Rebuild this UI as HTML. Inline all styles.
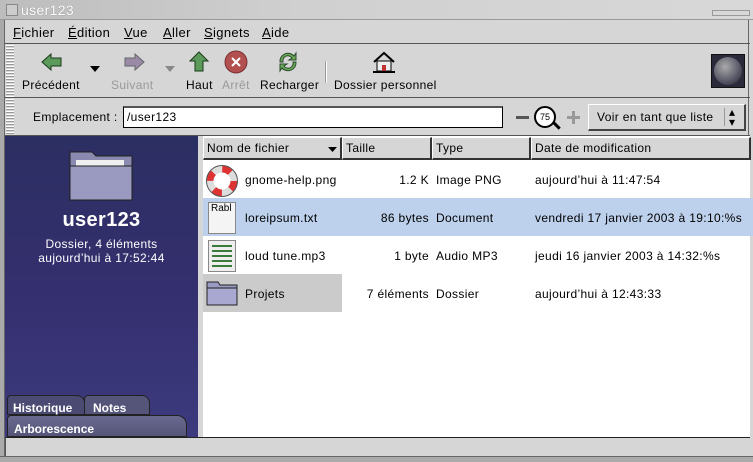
<!DOCTYPE html>
<html><head><meta charset="utf-8"><style>
*{margin:0;padding:0;box-sizing:border-box}
body{width:753px;height:462px;overflow:hidden;background:#d6d6d6;font-family:"Liberation Sans","DejaVu Sans",sans-serif;font-size:12px;color:#000;position:relative;letter-spacing:0.35px}
.a{position:absolute;white-space:nowrap}
u{text-decoration:underline}
.hd{position:absolute;top:137px;height:23px;background:#d6d6d6;border:1px solid #000;border-top-color:#fff;border-left-color:#fff;border-right:2px solid #333;border-bottom:2px solid #333;padding:3px 0 0 3px}
.row{position:absolute;left:203px;width:550px;height:38px}
</style></head><body>
<div class="a" style="left:0;top:0;width:753px;height:20px;background:linear-gradient(90deg,#bdbdbd,#d0d0d0 40%,#d8d8d8);border-bottom:1px solid #999"></div>
<div class="a" style="left:6px;top:4px;width:12px;height:12px;border:1px solid #888;background:#ccc"></div>
<div class="a" style="left:21px;top:2px;font-size:14px;color:#fff;text-shadow:0 0 1px #777">user123</div>
<div class="a" style="left:712px;top:10px;width:38px;height:6px;border:1px solid #999"></div>
<div class="a" style="left:0;top:20px;width:5px;height:442px;background:#aaa;border-right:1px solid #666"></div>
<div class="a" style="left:748px;top:20px;width:5px;height:442px;background:#d6d6d6;border-left:1px solid #666"></div>
<div class="a" style="left:5px;top:20px;width:745px;height:24px;border-bottom:1px solid #555"></div>
<div class="a" style="left:13px;top:25px;font-size:13px"><u>F</u>ichier</div>
<div class="a" style="left:68px;top:25px;font-size:13px"><u>É</u>dition</div>
<div class="a" style="left:124px;top:25px;font-size:13px"><u>V</u>ue</div>
<div class="a" style="left:163px;top:25px;font-size:13px"><u>A</u>ller</div>
<div class="a" style="left:204px;top:25px;font-size:13px"><u>S</u>ignets</div>
<div class="a" style="left:262px;top:25px;font-size:13px"><u>A</u>ide</div>
<div class="a" style="left:6px;top:45px;width:8px;height:52px;background:repeating-linear-gradient(#fff 0 1px,#999 1px 2px,#d6d6d6 2px 3px)"></div>
<div class="a" style="left:5px;top:97px;width:745px;height:1px;background:#555"></div>
<svg class="a" style="left:40px;top:51px" width="24" height="22"><path d="M2 11 L11 3 V7 H21 V15 H11 V19 Z" fill="#5c9a5c" stroke="#1a3a1a"/></svg>
<div class="a" style="left:22px;top:78px">Précédent</div>
<svg class="a" style="left:90px;top:66px" width="10" height="6"><path d="M0 0H10L5 6Z" fill="#000"/></svg>
<svg class="a" style="left:122px;top:51px" width="24" height="22"><path d="M22 11 L13 3 V7 H3 V15 H13 V19 Z" fill="#9a8aa8" stroke="#666"/></svg>
<div class="a" style="left:111px;top:78px;color:#999">Suivant</div>
<svg class="a" style="left:165px;top:66px" width="10" height="6"><path d="M0 0H10L5 6Z" fill="#888"/></svg>
<svg class="a" style="left:188px;top:50px" width="22" height="24"><path d="M11 2 L20 11 H15 V21 H7 V11 H2 Z" fill="#5c9a5c" stroke="#1a3a1a"/></svg>
<div class="a" style="left:186px;top:78px">Haut</div>
<svg class="a" style="left:224px;top:50px" width="24" height="24"><circle cx="12" cy="12" r="11" fill="#b25050" stroke="#7a3030"/><path d="M8 8L16 16M16 8L8 16" stroke="#fff" stroke-width="2"/></svg>
<div class="a" style="left:222px;top:78px;color:#999">Arrêt</div>
<svg class="a" style="left:276px;top:50px" width="24" height="24"><path d="M4 12A8 8 0 0 1 18 6L20 3V10H13L16 8A5 5 0 0 0 7 12Z" fill="#6aaa5a" stroke="#2a4a2a"/><path d="M20 12A8 8 0 0 1 6 18L4 21V14H11L8 16A5 5 0 0 0 17 12Z" fill="#6aaa5a" stroke="#2a4a2a"/></svg>
<div class="a" style="left:260px;top:78px">Recharger</div>
<div class="a" style="left:325px;top:61px;width:2px;height:22px;border-left:1px solid #999;border-right:1px solid #fff"></div>
<svg class="a" style="left:372px;top:50px" width="24" height="24"><path d="M2 12L12 3L22 12" fill="none" stroke="#000" stroke-width="2"/><rect x="5" y="11" width="14" height="10" fill="#eee" stroke="#000"/><rect x="10" y="15" width="4" height="6" fill="#b33"/><path d="M1 22H23" stroke="#000" stroke-width="2"/></svg>
<div class="a" style="left:334px;top:78px">Dossier personnel</div>
<div class="a" style="left:711px;top:54px;width:34px;height:34px;background:#2a2a3a;border:1px solid #111"><div style="margin:2px;width:28px;height:28px;border-radius:50%;background:radial-gradient(circle at 40% 35%,#aaa,#556 60%,#222)"></div></div>
<div class="a" style="left:6px;top:99px;width:8px;height:35px;background:repeating-linear-gradient(#fff 0 1px,#999 1px 2px,#d6d6d6 2px 3px)"></div>
<div class="a" style="left:33px;top:110px">Emplacement :</div>
<div class="a" style="left:123px;top:106px;width:380px;height:22px;background:#fff;border:1px solid #000;border-top:2px solid #555;padding:2px 3px">/user123</div>
<div class="a" style="left:516px;top:116px;width:13px;height:3px;background:#555"></div>
<div class="a" style="left:534px;top:106px;width:22px;height:22px;border:2px solid #000;border-radius:50%;background:#fff;font-size:9px;text-align:center;line-height:18px;letter-spacing:0">75</div>
<div class="a" style="left:552px;top:124px;width:9px;height:3px;background:#000;transform:rotate(45deg)"></div>
<div class="a" style="left:567px;top:116px;width:13px;height:3px;background:#999"></div>
<div class="a" style="left:572px;top:111px;width:3px;height:13px;background:#999"></div>
<div class="a" style="left:588px;top:104px;width:158px;height:27px;border:1px solid #fff;border-right:2px solid #444;border-bottom:2px solid #444;padding:5px 0 0 8px">Voir en tant que liste</div>
<div class="a" style="left:724px;top:108px;width:1px;height:18px;background:#999"></div>
<div class="a" style="left:729px;top:107px;font-size:12px;line-height:10px">▴<br>▾</div>
<div class="a" style="left:5px;top:135px;width:745px;height:1px;background:#555"></div>
<div class="a" style="left:5px;top:136px;width:193px;height:301px;background:linear-gradient(180deg,#2c2f62 0%,#342f6e 50%,#3c3a7e 100%)"></div>
<svg class="a" style="left:68px;top:148px" width="66" height="54"><path d="M2 4H24L28 8H64V52H2Z" fill="#8a8ab0" stroke="#222"/><rect x="8" y="12" width="48" height="10" fill="#eee"/><path d="M2 18H64V52H2Z" fill="#9a9ac0" stroke="#222"/></svg>
<div class="a" style="left:5px;top:209px;width:193px;text-align:center;color:#fff;font-weight:bold;font-size:20px">user123</div>
<div class="a" style="left:5px;top:237px;width:193px;text-align:center;color:#fff">Dossier, 4 éléments</div>
<div class="a" style="left:5px;top:251px;width:193px;text-align:center;color:#fff">aujourd’hui à 17:52:44</div>
<div class="a" style="left:7px;top:395px;width:78px;height:20px;background:#4a4a72;border-radius:4px 8px 0 0;border:1px solid #222"></div>
<div class="a" style="left:84px;top:395px;width:66px;height:20px;background:#55557a;border-radius:4px 8px 0 0;border:1px solid #222"></div>
<div class="a" style="left:13px;top:401px;color:#fff;font-weight:bold;letter-spacing:0">Historique</div>
<div class="a" style="left:93px;top:401px;color:#fff;font-weight:bold;letter-spacing:0">Notes</div>
<div class="a" style="left:7px;top:415px;width:180px;height:22px;background:linear-gradient(#6a6a90,#55557a);border-radius:4px 10px 0 0;border:1px solid #222"></div>
<div class="a" style="left:14px;top:422px;color:#fff;font-weight:bold;letter-spacing:0">Arborescence</div>
<div class="a" style="left:203px;top:136px;width:547px;height:302px;background:#fff"></div>
<div class="hd" style="left:203px;width:139px">Nom de fichier</div>
<svg class="a" style="left:328px;top:147px" width="9" height="5"><path d="M0 0H9L4.5 5Z"/></svg>
<div class="hd" style="left:342px;width:90px">Taille</div>
<div class="hd" style="left:432px;width:99px">Type</div>
<div class="hd" style="left:531px;width:220px">Date de modification</div>
<div class="row" style="top:198px;background:#bdd0ec"></div>
<div class="a" style="left:203px;top:274px;width:139px;height:38px;background:#cbcbcb"></div>
<svg class="a" style="left:206px;top:165px" width="32" height="32"><circle cx="16" cy="16" r="12" fill="none" stroke="#ddd" stroke-width="7"/><circle cx="16" cy="16" r="12" fill="none" stroke="#d33" stroke-width="7" stroke-dasharray="9 9.8"/><circle cx="16" cy="16" r="15.5" fill="none" stroke="#555" stroke-width="1"/></svg>
<div class="a" style="left:245px;top:173px">gnome-help.png</div>
<div class="a" style="left:208px;top:202px;width:28px;height:32px;background:#f4f4f4;border:1px solid #888;font-size:10px;padding-left:2px;letter-spacing:0">Rabl</div>
<div class="a" style="left:245px;top:211px">loreipsum.txt</div>
<div class="a" style="left:208px;top:240px;width:28px;height:32px;background:#eee;border:1px solid #888"><div style="margin:4px 3px;height:22px;background:repeating-linear-gradient(#3a7a3a 0 2px,transparent 2px 5px)"></div></div>
<div class="a" style="left:245px;top:249px">loud tune.mp3</div>
<svg class="a" style="left:206px;top:280px" width="32" height="26"><path d="M1 2H12L14 5H31V25H1Z" fill="#9a9ac4" stroke="#222"/><path d="M1 8H31V25H1Z" fill="#a8a8d0" stroke="#222"/></svg>
<div class="a" style="left:245px;top:287px">Projets</div>
<div class="a" style="left:342px;top:173px;width:87px;text-align:right">1.2 K</div>
<div class="a" style="left:342px;top:211px;width:87px;text-align:right">86 bytes</div>
<div class="a" style="left:342px;top:249px;width:87px;text-align:right">1 byte</div>
<div class="a" style="left:342px;top:287px;width:87px;text-align:right">7 éléments</div>
<div class="a" style="left:436px;top:173px">Image PNG</div>
<div class="a" style="left:436px;top:211px">Document</div>
<div class="a" style="left:436px;top:249px">Audio MP3</div>
<div class="a" style="left:436px;top:287px">Dossier</div>
<div class="a" style="left:535px;top:173px">aujourd’hui à 11:47:54</div>
<div class="a" style="left:535px;top:211px">vendredi 17 janvier 2003 à 19:10:%s</div>
<div class="a" style="left:535px;top:249px">jeudi 16 janvier 2003 à 14:32:%s</div>
<div class="a" style="left:535px;top:287px">aujourd’hui à 12:43:33</div>
<div class="a" style="left:5px;top:437px;width:745px;height:19px;border-top:1px solid #222;border-left:1px solid #555;background:#d6d6d6"></div>
<div class="a" style="left:0;top:456px;width:753px;height:6px;background:#aaa;border-top:1px solid #666"></div>
</body></html>
